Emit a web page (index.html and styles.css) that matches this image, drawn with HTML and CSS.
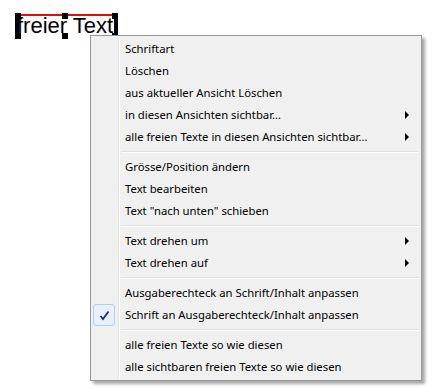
FILE: index.html
```html
<!DOCTYPE html>
<html lang="de">
<head>
    <meta charset="UTF-8">
    <title>Kontextmenü freier Text</title>
    <link rel="stylesheet" href="styles.css">
</head>
<body>
    <div class="canvas">
        <!-- selected free text on the sheet -->
        <div class="text-frame">
            <span class="frame-line"></span>
            <span class="handle h-tl"></span>
            <span class="handle h-tm"></span>
            <span class="handle h-tr"></span>
            <span class="handle h-bl"></span>
            <span class="handle h-bm"></span>
            <span class="handle h-br"></span>
            <span class="frame-text">freier Text</span>
        </div>

        <!-- context menu -->
        <ul class="menu">
            <li class="item">Schriftart</li>
            <li class="item">Löschen</li>
            <li class="item">aus aktueller Ansicht Löschen</li>
            <li class="item sub">in diesen Ansichten sichtbar...</li>
            <li class="item sub">alle freien Texte in diesen Ansichten sichtbar...</li>
            <li class="sep"></li>
            <li class="item">Grösse/Position ändern</li>
            <li class="item">Text bearbeiten</li>
            <li class="item">Text "nach unten" schieben</li>
            <li class="sep"></li>
            <li class="item sub">Text drehen um</li>
            <li class="item sub">Text drehen auf</li>
            <li class="sep"></li>
            <li class="item">Ausgaberechteck an Schrift/Inhalt anpassen</li>
            <li class="item checked">
                <span class="check">
                    <svg width="11" height="11" viewBox="0 0 11 11">
                        <path d="M1.5 6 L4 9 L9.5 1.5" fill="none" stroke="#1a2a8a" stroke-width="1.8"/>
                    </svg>
                </span>
                Schrift an Ausgaberechteck/Inhalt anpassen
            </li>
            <li class="sep"></li>
            <li class="item">alle freien Texte so wie diesen</li>
            <li class="item">alle sichtbaren freien Texte so wie diesen</li>
        </ul>
    </div>
</body>
</html>
```

FILE: styles.css
```css
/* Win7 style context menu over a drawing sheet */
html, body {
    margin: 0;
    padding: 0;
    background: #ffffff;
}
.canvas {
    position: relative;
    width: 432px;
    height: 389px;
    overflow: hidden;
    font-family: "Noto Sans", "Liberation Sans", sans-serif;
}

/* --- selected text frame --- */
.text-frame {
    position: absolute;
    left: 15px;
    top: 13px;
    width: 103px;
    height: 26px;
    background: #ffffff;
    border-left: 4px solid #000;
    border-right: 4px solid #000;
    box-sizing: border-box;
}
.frame-line {
    position: absolute;
    left: 0;
    right: 0;
    top: 1px;
    height: 2px;
    background: #e01010;
}
.frame-text {
    position: absolute;
    left: -2px;
    top: 0;
    font-family: "Liberation Sans", Arial, sans-serif;
    font-size: 22px;
    line-height: 26px;
    color: #000;
    white-space: nowrap;
}
.handle {
    position: absolute;
    width: 6px;
    height: 6px;
    background: #000;
}
.h-tl { left: -4px; top: 0; }
.h-tm { left: 43px; top: 0; }
.h-tr { right: -4px; top: 0; }
.h-bl { left: -4px; bottom: 0; }
.h-bm { left: 43px; bottom: 0; }
.h-br { right: -4px; bottom: 0; }

/* --- menu --- */
.menu {
    position: absolute;
    left: 90px;
    top: 35px;
    width: 332px;
    margin: 0;
    padding: 2px;
    list-style: none;
    box-sizing: border-box;
    background: #f0f0f0;
    border: 1px solid #979797;
    box-shadow: 3px 3px 3px rgba(0, 0, 0, 0.35);
    font-size: 11.3px;
    color: #000;
}
.menu::before {
    content: "";
    position: absolute;
    left: 27px;
    top: 2px;
    bottom: 2px;
    width: 1px;
    background: #e2e3e3;
    border-right: 1px solid #ffffff;
}
.item {
    position: relative;
    height: 22px;
    line-height: 22px;
    padding-left: 32px;
    white-space: nowrap;
}
.sub::after {
    content: "";
    position: absolute;
    right: 10px;
    top: 7px;
    border-left: 4px solid #000;
    border-top: 4px solid transparent;
    border-bottom: 4px solid transparent;
}
.sep {
    height: 8px;
    position: relative;
}
.sep::after {
    content: "";
    position: absolute;
    left: 28px;
    right: 1px;
    top: 3px;
    height: 1px;
    background: #e0e0e0;
    border-bottom: 1px solid #ffffff;
}
.check {
    position: absolute;
    left: 0;
    top: 0;
    width: 22px;
    height: 22px;
    box-sizing: border-box;
    border: 1px solid #aecff7;
    border-radius: 3px;
    background: #e8f0fb;
    display: flex;
    align-items: center;
    justify-content: center;
}
```
